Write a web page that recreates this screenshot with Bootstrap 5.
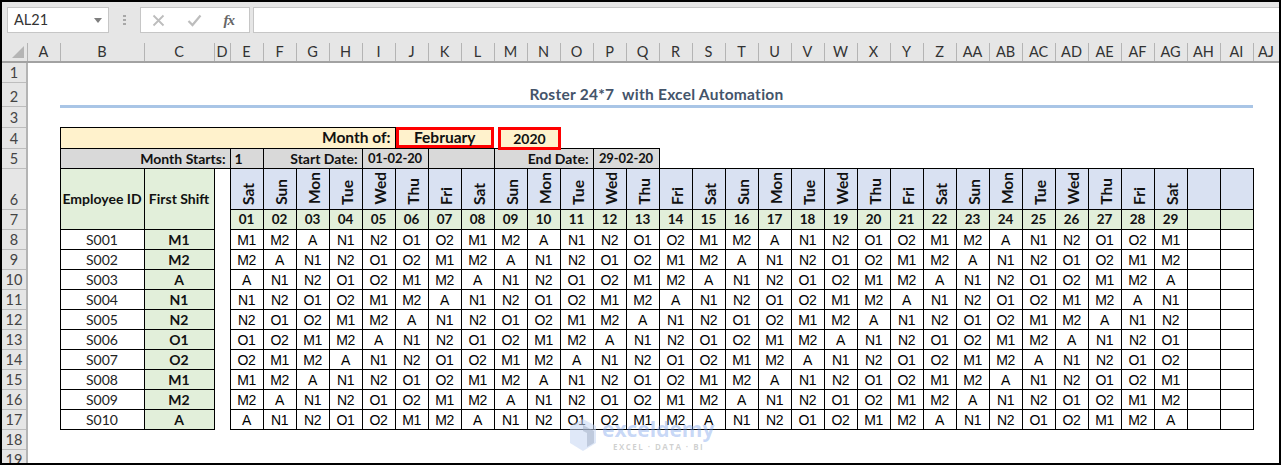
<!DOCTYPE html>
<html lang="en">
<head>
<meta charset="utf-8">
<title>Roster 24*7 with Excel Automation</title>
<link rel="stylesheet" href="https://cdn.jsdelivr.net/npm/bootstrap@5.3.0/dist/css/bootstrap.min.css">
<style>
html,body{margin:0;background:#000;overflow:hidden}
.xl-frame{position:relative;width:1281px;height:465px;border:2px solid #000;background:#fff;overflow:hidden;font-family:Lato,"Liberation Sans",sans-serif;color:#111}
.xl-bar{height:41px;background:#e6e6e6;padding:5px 0 10px 5px}
.xl-box{height:26px;background:#fff;border:1px solid #c6c6c6}
.xl-name{width:102px;padding:0 6px;font-size:14.5px;color:#333}
.xl-caret{width:0;height:0;border-left:4px solid transparent;border-right:4px solid transparent;border-top:5px solid #7f7f7f;margin-right:0}
.xl-dots{width:31px;display:flex;flex-direction:column;align-items:center;justify-content:center;gap:2px}
.xl-dots i{display:block;width:3px;height:2px;background:#a8a8a8}
.xl-fxbox{width:110px;margin-right:3px;padding-right:4px;position:relative}
.xl-fxt{font:italic 700 15px "Liberation Serif",serif;color:#666;letter-spacing:-1px}
.xl-formula{flex:1;border-right:0}
table.xl-sheet{table-layout:fixed;width:1276px;border-collapse:collapse;font-size:14px}
.xl-sheet td,.xl-sheet th{padding:0;white-space:nowrap;overflow:visible}
.xl-ch th{height:19px;background:#e6e6e6;border-right:1px solid #b4b4b4;border-bottom:2px solid #a2a2a2;font-weight:400;font-size:14.5px;text-align:center;color:#333;line-height:1}
.xl-ch .xl-corner{position:relative}
.xl-tri{position:absolute;right:3px;bottom:3px;width:0;height:0;border-left:12px solid transparent;border-bottom:12px solid #b5b5b5}
.xl-rh{background:#e6e6e6;border-right:2px solid #b4b4b4;border-bottom:1px solid #bdbdbd;font-weight:400!important;text-align:center;vertical-align:bottom;line-height:19px;font-size:14.5px;color:#444}
.xl-b{border:1px solid #000}
.xl-lab{font-weight:700;line-height:1}
.xl-date{font-size:13px;letter-spacing:-.1px}
.xl-num{font-size:13.5px}
.xl-big{font-size:15.5px}
.xl-cream{background:#fff2cc}
.xl-grey{background:#d9d9d9}
.xl-green{background:#e2efda}
.xl-blue{background:#d9e1f2}
.xl-title{border-bottom:3px solid #a9c5e6;text-align:center;vertical-align:bottom;font-weight:700;font-size:15.5px;color:#44546a;line-height:22px;letter-spacing:.26px;white-space:pre!important}
.xl-hl{position:relative}
.xl-red{position:absolute;border:3px solid #f00;display:flex;align-items:center;justify-content:center;font-weight:700}
.xl-red-a{left:0;right:0;top:-1px;bottom:0;font-size:15.5px}
.xl-red-b{left:4px;right:-1px;top:-1px;bottom:-2px;background:#fff2cc;font-size:14px}
.xl-day{vertical-align:bottom;text-align:center;font-weight:700;font-size:15.5px;line-height:1}
.xl-day span{display:inline-block;writing-mode:vertical-rl;transform:rotate(180deg);padding-top:2px;margin-left:4px}
.xl-d{font-family:"Liberation Sans",sans-serif;font-size:14px;letter-spacing:-.4px;text-align:center;line-height:1;color:#000}
.xl-id{text-align:center;font-size:14px;color:#222;line-height:1}
.xl-fs{text-align:center;font-weight:700;font-size:14px;line-height:1}
.xl-mark{position:absolute;left:567px;top:414px;width:150px;height:38px;pointer-events:none}
.xl-mark svg{position:absolute;left:0;top:2px}
.xl-mark-a{position:absolute;left:33px;top:1px;font:700 21px/24px "Open Sans",sans-serif;color:rgba(120,160,235,.42)}
.xl-mark-b{position:absolute;left:44px;top:26px;font:700 8px/10px "Open Sans",sans-serif;letter-spacing:1.45px;color:rgba(120,120,120,.35);white-space:nowrap}
</style>
</head>
<body>
<div class="xl-frame">
  <div class="xl-bar d-flex">
    <div class="xl-box xl-name d-flex align-items-center justify-content-between"><span>AL21</span><span class="xl-caret"></span></div>
    <div class="xl-dots"><i></i><i></i><i></i></div>
    <div class="xl-box xl-fxbox d-flex align-items-center justify-content-around">
      <svg width="13" height="13" viewBox="0 0 13 13"><path d="M1.5 1.5l10 10M11.5 1.5l-10 10" stroke="#bdbdbd" stroke-width="1.8" fill="none"/></svg>
      <svg width="15" height="13" viewBox="0 0 15 13"><path d="M1.5 7l4 4L13.5 1.5" stroke="#bdbdbd" stroke-width="2.2" fill="none"/></svg>
      <span class="xl-fxt">fx</span>
    </div>
    <div class="xl-box xl-formula"></div>
  </div>
  <table class="xl-sheet">
    <colgroup id="cols"></colgroup>
    <thead class="xl-ch"><tr id="chead"></tr></thead>
    <tbody id="tb">
      <tr style="height:20px"><th class="xl-rh">1</th><td colspan="36"></td></tr>
      <tr style="height:24px"><th class="xl-rh">2</th><td></td><td colspan="34" class="xl-title">Roster 24*7  with Excel Automation</td><td></td></tr>
      <tr style="height:21px"><th class="xl-rh">3</th><td colspan="36"></td></tr>
      <tr style="height:21px"><th class="xl-rh">4</th><td></td>
        <td colspan="8" class="xl-b xl-cream xl-lab xl-big text-end pe-1">Month of:</td>
        <td colspan="3" class="xl-cream xl-hl"><div class="xl-red xl-red-a">February</div></td>
        <td colspan="2" class="xl-hl"><div class="xl-red xl-red-b">2020</div></td>
        <td colspan="22"></td></tr>
      <tr style="height:20px"><th class="xl-rh">5</th><td></td>
        <td colspan="3" class="xl-b xl-grey xl-lab text-end pe-1">Month Starts:</td>
        <td class="xl-b xl-grey xl-lab ps-1">1</td>
        <td colspan="3" class="xl-b xl-grey xl-lab text-end pe-1">Start Date:</td>
        <td colspan="2" class="xl-b xl-grey xl-lab xl-date text-center">01-02-20</td>
        <td colspan="2" class="xl-b xl-grey"></td>
        <td colspan="3" class="xl-b xl-grey xl-lab text-end pe-1">End Date:</td>
        <td colspan="2" class="xl-b xl-grey xl-lab xl-date text-center">29-02-20</td>
        <td colspan="19"></td></tr>
    </tbody>
  </table>
  <div class="xl-mark">
    <svg width="30" height="34" viewBox="0 0 30 34"><path d="M14 1L27 8v17l-13 8L1 25V8z" fill="#c5d5f3" opacity=".55"/><path d="M14 7l11 6v12l-7 4V15l-4-2z" fill="#9aa6bd" opacity=".45"/></svg>
    <div class="xl-mark-a">exceldemy</div>
    <div class="xl-mark-b">EXCEL · DATA · BI</div>
  </div>
</div>
<script src="https://cdn.jsdelivr.net/npm/bootstrap@5.3.0/dist/js/bootstrap.bundle.min.js"></script>
<script>
(function(){
  var L=['','A','B','C','D'];
  var al='ABCDEFGHIJKLMNOPQRSTUVWXYZ';
  for(var i=4;i<26;i++)L.push(al[i]);
  for(i=0;i<10;i++)L.push('A'+al[i]);
  var W=[25,33,84,70,16];
  for(i=0;i<31;i++)W.push(33);
  W.push(26);
  document.getElementById('cols').innerHTML=W.map(function(w){return '<col style="width:'+w+'px">'}).join('');
  document.getElementById('chead').innerHTML=L.map(function(l,i){return i==0?'<th class="xl-corner"><span class="xl-tri"></span></th>':'<th>'+l+'</th>'}).join('');
  var D=['Sat','Sun','Mon','Tue','Wed','Thu','Fri'],S=['M1','M2','A','N1','N2','O1','O2'];
  var h='';
  var r6='<tr style="height:41px"><th class="xl-rh">6</th><td></td><td rowspan="2" class="xl-b xl-green xl-lab text-center">Employee ID</td><td rowspan="2" class="xl-b xl-green xl-lab text-center">First Shift</td><td></td>';
  var r7='<tr style="height:20px"><th class="xl-rh">7</th><td></td><td></td>';
  for(i=0;i<31;i++){
    r6+='<td class="xl-b xl-blue xl-day">'+(i<29?'<span>'+D[i%7]+'</span>':'')+'</td>';
    r7+='<td class="xl-b xl-green xl-lab xl-num text-center">'+(i<29?(i<9?'0':'')+(i+1):'')+'</td>';
  }
  h+=r6+'<td></td></tr>'+r7+'<td></td></tr>';
  for(var r=0;r<10;r++){
    var s=r%7,n='S0'+(r==9?'10':'0'+(r+1));
    h+='<tr style="height:20px"><th class="xl-rh">'+(r+8)+'</th><td></td><td class="xl-b xl-id">'+n+'</td><td class="xl-b xl-green xl-fs">'+S[s]+'</td><td></td>';
    for(i=0;i<31;i++)h+='<td class="xl-b xl-d">'+(i<29?S[(s+i)%7]:'')+'</td>';
    h+='<td></td></tr>';
  }
  h+='<tr style="height:20px"><th class="xl-rh">18</th><td colspan="36"></td></tr><tr style="height:20px"><th class="xl-rh">19</th><td colspan="36"></td></tr>';
  document.getElementById('tb').insertAdjacentHTML('beforeend',h);
})();
</script>
</body>
</html>
